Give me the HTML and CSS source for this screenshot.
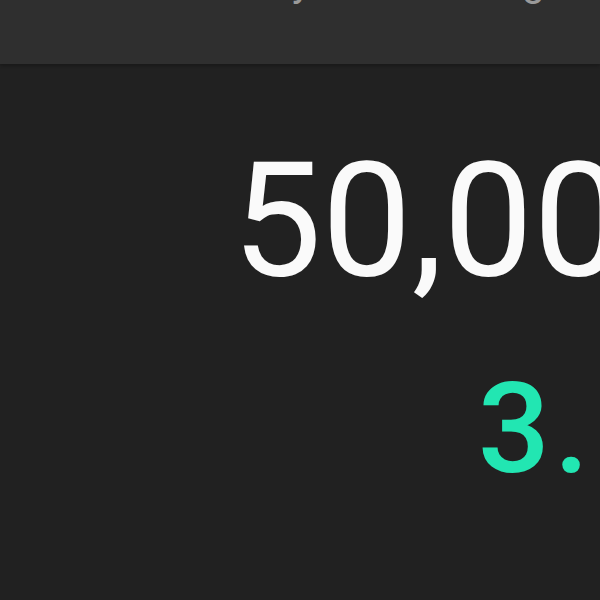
FILE: index.html
```html
<!DOCTYPE html>
<html lang="en">
<head>
  <meta charset="UTF-8">
  <title>Balance</title>
  <link rel="stylesheet" href="styles.css">
</head>
<body>
  <!-- top navigation, scrolled mostly out of view -->
  <header class="topbar">
    <span class="nav-item nav-buy">Buy</span>
    <span class="nav-item nav-pricing">Pricing</span>
  </header>

  <main class="summary">
    <div class="amount">50,000</div>
    <div class="rate">3.5%</div>
  </main>
</body>
</html>
```

FILE: styles.css
```css
html, body {
  overflow: hidden;
}
body {
  margin: 0;
  padding: 0;
  width: 600px;
  height: 600px;
  background-color: #212121;
  font-family: Roboto, "Liberation Sans", sans-serif;
  color: #fafafa;
}
.topbar {
  display: flex;
  height: 64px;
  background-color: #2f2f2f;
  box-shadow: 0 2px 3px rgba(0,0,0,0.25);
  overflow: hidden;
}
.nav-item {
  font-size: 40px;
  line-height: 40px;
  margin-top: -37px;
  color: #9a9a9a;
  white-space: nowrap;
}
.nav-buy {
  margin-left: 245px;
}
.nav-pricing {
  margin-left: 110px;
}
.summary {
  width: 713px;
  text-align: right;
}
.amount {
  margin-top: 77px;
  font-size: 160px;
  line-height: 1;
  white-space: nowrap;
}
.rate {
  margin-top: 64px;
  margin-right: -54px;
  font-size: 127px;
  font-weight: 500;
  line-height: 1;
  letter-spacing: 4px;
  color: #22e6b2;
  white-space: nowrap;
}
```
